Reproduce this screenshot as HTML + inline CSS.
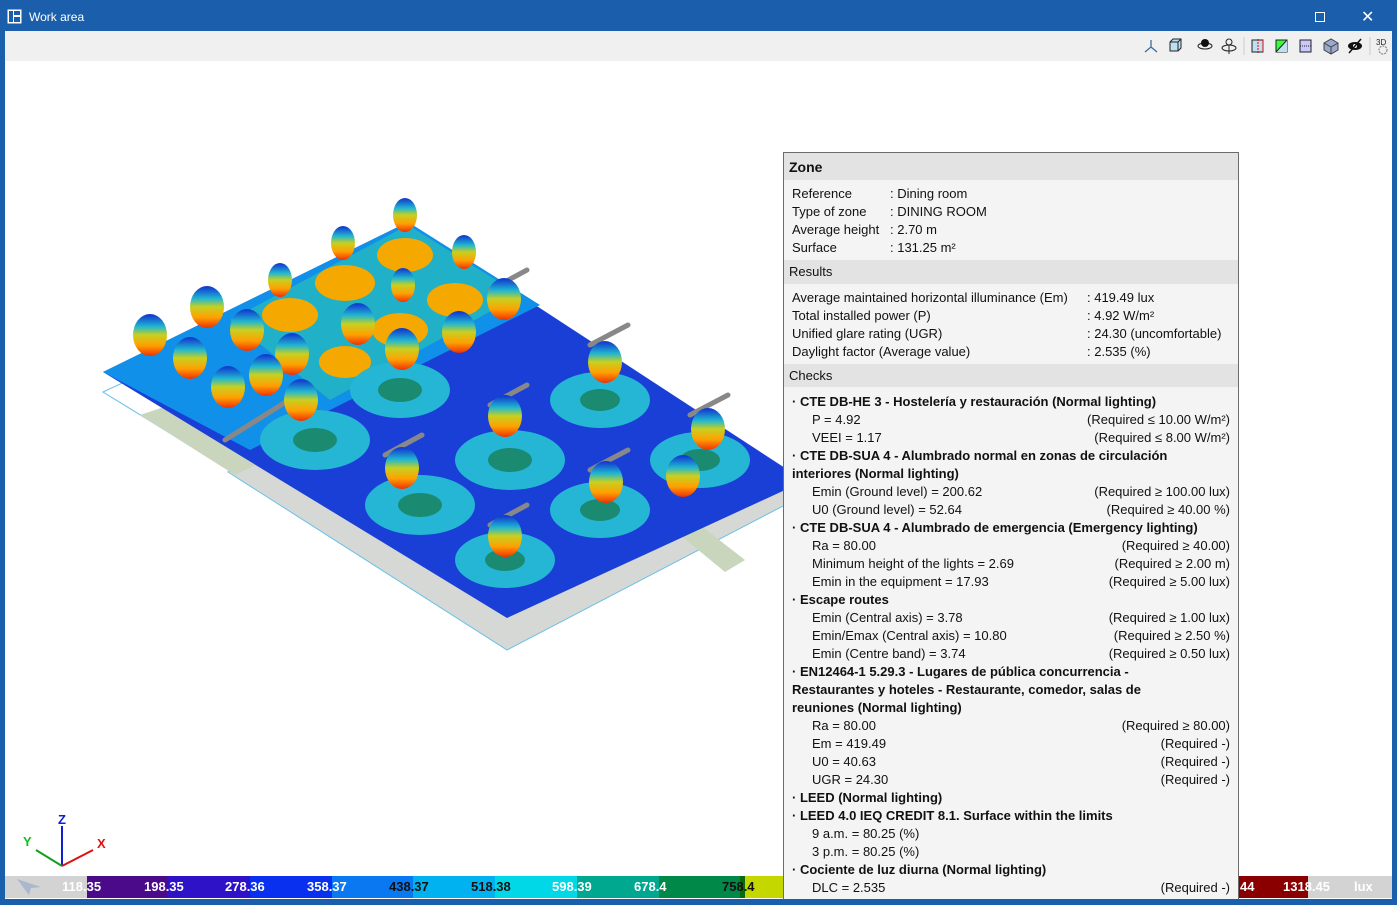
<!DOCTYPE html>
<html><head><meta charset="utf-8">
<style>
*{margin:0;padding:0;box-sizing:border-box}
body{width:1397px;height:905px;overflow:hidden;background:#1a5fab;font-family:"Liberation Sans",sans-serif;position:relative}
#title{position:absolute;left:0;top:0;width:1397px;height:31px;background:#1b5fac;color:#fff;font-size:12px}
#tb{position:absolute;left:5px;top:31px;width:1387px;height:30px;background:#f0f0f0}
#canvas{position:absolute;left:5px;top:61px;width:1387px;height:838px;background:#fff;overflow:hidden}
#legend{position:absolute;left:5px;top:876px;width:1387px;height:22px;background:#d3d3d3;font-size:13px;font-weight:bold;color:#fff}
#legend div{position:absolute;top:0;height:22px;line-height:22px}
#panel{position:absolute;left:783px;top:152px;width:456px;height:750px;background:#f4f4f4;border:1px solid #6b6b6b;font-size:13px;color:#111}
.h{position:absolute;left:0;width:454px;background:#e3e3e3;padding-left:5px}
.l{position:absolute;left:8px;width:438px;height:18px;line-height:18px;white-space:nowrap}
.l .r{position:absolute;right:0;top:0}
.b{font-weight:bold}
.s{padding-left:20px}
</style></head><body>
<div id="title">
 <svg style="position:absolute;left:7px;top:9px" width="15" height="15" viewBox="0 0 15 15"><rect x="0.5" y="0.5" width="14" height="14" fill="#fff"/><rect x="2" y="2" width="4" height="11" fill="#1b5fac"/><rect x="7" y="2" width="6" height="4" fill="#1b5fac"/><rect x="7" y="8" width="6" height="5" fill="#1b5fac"/></svg>
 <span style="position:absolute;left:29px;top:10px">Work area</span>
 <div style="position:absolute;left:1315px;top:12px;width:10px;height:10px;border:1px solid #fff"></div>
 <span style="position:absolute;left:1361px;top:7px;font-size:16px">✕</span>
</div>
<div id="tb">
 <svg style="position:absolute;left:1138px;top:5px" width="250" height="20" viewBox="0 0 250 20">
  <g stroke="#3a6d9a" fill="none" stroke-width="1.3"><path d="M8 4V11L2 16M8 11L14 16"/></g>
  <path d="M27 6l3-3h8v9l-3 3h-8z" fill="#bfe0f2" stroke="#222"/><path d="M27 6h8v9M35 6l3-3" stroke="#222" fill="none"/>
  <ellipse cx="62" cy="10" rx="7" ry="3" fill="none" stroke="#222"/><circle cx="62" cy="7" r="4" fill="#111"/>
  <circle cx="86" cy="6" r="3" fill="none" stroke="#222"/><ellipse cx="86" cy="12" rx="7" ry="3" fill="none" stroke="#222"/><path d="M86 9v9" stroke="#222"/>
  <line x1="101" y1="1" x2="101" y2="19" stroke="#ccc"/>
  <rect x="109" y="4" width="11" height="12" fill="#bfe0f2" stroke="#222"/><path d="M115 3v14" stroke="#e00" stroke-dasharray="2 1"/><path d="M120 4v12" stroke="#e00"/>
  <rect x="133" y="4" width="11" height="12" fill="#3f3" stroke="#222"/><path d="M133 16L144 4V16z" fill="#bfe0f2"/><path d="M133 16L144 4" stroke="#222"/>
  <rect x="157" y="4" width="11" height="12" fill="#c8c8ff" stroke="#222"/><path d="M157 10h11" stroke="#222" stroke-dasharray="1 1"/>
  <path d="M181 7l7-4 7 4v7l-7 4-7-4z" fill="#9ac" stroke="#444"/><path d="M181 7l7 4 7-4M188 11v7" stroke="#444" fill="none"/>
  <ellipse cx="212" cy="10" rx="7" ry="4" fill="#111"/><circle cx="212" cy="10" r="2" fill="#fff"/><path d="M206 17l12-14" stroke="#111" stroke-width="1.5"/>
  <line x1="227" y1="1" x2="227" y2="19" stroke="#ccc"/>
  <text x="233" y="9" font-size="8" font-family="Liberation Sans" fill="#222">3D</text><circle cx="240" cy="14" r="4" fill="none" stroke="#777" stroke-dasharray="2 1"/>
 </svg>
</div>
<div id="canvas">
 <svg width="1387" height="838" viewBox="5 61 1387 838" style="position:absolute;left:0;top:0">
  <defs>
   <linearGradient id="lum" x1="0" y1="0" x2="0" y2="1"><stop offset="0" stop-color="#1030d0"/><stop offset="0.3" stop-color="#20b8d0"/><stop offset="0.5" stop-color="#c8d020"/><stop offset="0.75" stop-color="#ffa000"/><stop offset="1" stop-color="#f03000"/></linearGradient>
  </defs>
  <polygon points="228,472 300,440 785,490 785,505 507,650" fill="#d6d8d6" stroke="#6ac0e8"/>
  <polygon points="103,392 150,370 260,455 230,470" fill="#fff" stroke="#6ac0e8"/>
  <polygon points="140,415 170,405 255,465 235,475" fill="#c9d6bd"/>
  <polygon points="680,535 700,525 745,560 725,572" fill="#c9d6bd"/>
  <polygon points="103,372 408,222 785,468 785,490 507,618" fill="#1a3fd6"/>
  <polygon points="103,372 408,222 540,305 250,450" fill="#1090e8"/>
  <polygon points="230,320 408,225 520,295 330,400" fill="#20b0c8"/>
  <ellipse cx="345" cy="283" rx="30" ry="18" fill="#f5a800"/>
  <ellipse cx="405" cy="255" rx="28" ry="17" fill="#f5a800"/>
  <ellipse cx="290" cy="315" rx="28" ry="17" fill="#f5a800"/>
  <ellipse cx="455" cy="300" rx="28" ry="17" fill="#f5a800"/>
  <ellipse cx="400" cy="330" rx="28" ry="17" fill="#f5a800"/>
  <ellipse cx="345" cy="362" rx="26" ry="16" fill="#f5a800"/>
  <g fill="#25b5d5">
   <ellipse cx="400" cy="390" rx="50" ry="28"/><ellipse cx="315" cy="440" rx="55" ry="30"/><ellipse cx="510" cy="460" rx="55" ry="30"/>
   <ellipse cx="420" cy="505" rx="55" ry="30"/><ellipse cx="600" cy="400" rx="50" ry="28"/><ellipse cx="700" cy="460" rx="50" ry="28"/>
   <ellipse cx="600" cy="510" rx="50" ry="28"/><ellipse cx="505" cy="560" rx="50" ry="28"/>
  </g>
  <g fill="#1a8a70">
   <ellipse cx="400" cy="390" rx="22" ry="12"/><ellipse cx="315" cy="440" rx="22" ry="12"/><ellipse cx="510" cy="460" rx="22" ry="12"/>
   <ellipse cx="420" cy="505" rx="22" ry="12"/><ellipse cx="600" cy="400" rx="20" ry="11"/><ellipse cx="700" cy="460" rx="20" ry="11"/>
   <ellipse cx="600" cy="510" rx="20" ry="11"/><ellipse cx="505" cy="560" rx="20" ry="11"/>
  </g>
  <g stroke="#888" stroke-width="5" stroke-linecap="round">
   <path d="M490 290l37-20M590 345l38-20M490 405l37-20M690 415l38-20M385 455l37-20M590 470l38-20M490 525l37-20M225 440l80-50"/>
  </g>
  <g fill="url(#lum)">
   <ellipse cx="405" cy="215" rx="12" ry="17"/><ellipse cx="343" cy="243" rx="12" ry="17"/><ellipse cx="464" cy="252" rx="12" ry="17"/>
   <ellipse cx="280" cy="280" rx="12" ry="17"/><ellipse cx="403" cy="285" rx="12" ry="17"/><ellipse cx="207" cy="307" rx="17" ry="21"/>
   <ellipse cx="150" cy="335" rx="17" ry="21"/><ellipse cx="247" cy="330" rx="17" ry="21"/><ellipse cx="358" cy="324" rx="17" ry="21"/>
   <ellipse cx="190" cy="358" rx="17" ry="21"/><ellipse cx="292" cy="354" rx="17" ry="21"/><ellipse cx="266" cy="375" rx="17" ry="21"/>
   <ellipse cx="228" cy="387" rx="17" ry="21"/><ellipse cx="301" cy="400" rx="17" ry="21"/><ellipse cx="402" cy="349" rx="17" ry="21"/>
   <ellipse cx="459" cy="332" rx="17" ry="21"/><ellipse cx="504" cy="299" rx="17" ry="21"/><ellipse cx="605" cy="362" rx="17" ry="21"/>
   <ellipse cx="505" cy="416" rx="17" ry="21"/><ellipse cx="708" cy="429" rx="17" ry="21"/><ellipse cx="402" cy="468" rx="17" ry="21"/>
   <ellipse cx="606" cy="482" rx="17" ry="21"/><ellipse cx="683" cy="476" rx="17" ry="21"/><ellipse cx="505" cy="536" rx="17" ry="21"/>
  </g>
  <g>
   <line x1="62" y1="866" x2="62" y2="826" stroke="#1020d0" stroke-width="2"/><text x="58" y="824" fill="#1020d0" font-size="13" font-weight="bold" font-family="Liberation Sans">Z</text>
   <line x1="62" y1="866" x2="36" y2="850" stroke="#10a020" stroke-width="2"/><text x="23" y="846" fill="#10c020" font-size="13" font-weight="bold" font-family="Liberation Sans">Y</text>
   <line x1="62" y1="866" x2="93" y2="850" stroke="#e01010" stroke-width="2"/><text x="97" y="848" fill="#e01010" font-size="13" font-weight="bold" font-family="Liberation Sans">X</text>
  </g>
 </svg>
</div>
<div id="legend">
 <svg style="position:absolute;left:10px;top:0" width="30" height="20"><path d="M2 3l24 8-10 1-2 7z" fill="#aab8cc"/></svg>
 <div style="left:82px;width:80px;background:#4b0a8a"></div>
 <div style="left:162px;width:83px;background:#2e12c8"></div>
 <div style="left:245px;width:82px;background:#0830ee"></div>
 <div style="left:327px;width:81px;background:#0a78f0"></div>
 <div style="left:408px;width:82px;background:#00b2f0"></div>
 <div style="left:490px;width:82px;background:#00d8e8"></div>
 <div style="left:572px;width:82px;background:#00a890"></div>
 <div style="left:654px;width:81px;background:#008848"></div>
 <div style="left:735px;width:80px;background:#0a6a10"></div>
 <div style="width:43px;left:740px;background:#c4d800"></div>
 <div style="left:1233px;width:70px;background:#8a0000"></div>
 <div style="left:57px">118.35</div><div style="left:139px">198.35</div><div style="left:220px">278.36</div>
 <div style="left:302px">358.37</div><div style="left:384px;color:#111">438.37</div><div style="left:466px;color:#111">518.38</div>
 <div style="left:547px">598.39</div><div style="left:629px">678.4</div><div style="left:717px;color:#111">758.4</div>
 <div style="left:1235px">44</div><div style="left:1278px">1318.45</div><div style="left:1349px">lux</div>
</div>
<div id="panel">
 <div class="h b" style="top:0;height:27px;line-height:28px;font-size:14px">Zone</div>
 <div class="l" style="top:32px">Reference<span style="position:absolute;left:98px">: Dining room</span></div>
 <div class="l" style="top:50px">Type of zone<span style="position:absolute;left:98px">: DINING ROOM</span></div>
 <div class="l" style="top:68px">Average height<span style="position:absolute;left:98px">: 2.70 m</span></div>
 <div class="l" style="top:86px">Surface<span style="position:absolute;left:98px">: 131.25 m²</span></div>
 <div class="h" style="top:107px;height:24px;line-height:24px">Results</div>
 <div class="l" style="top:136px">Average maintained horizontal illuminance (Em)<span style="position:absolute;left:295px">: 419.49 lux</span></div>
 <div class="l" style="top:154px">Total installed power (P)<span style="position:absolute;left:295px">: 4.92 W/m²</span></div>
 <div class="l" style="top:172px">Unified glare rating (UGR)<span style="position:absolute;left:295px">: 24.30 (uncomfortable)</span></div>
 <div class="l" style="top:190px">Daylight factor (Average value)<span style="position:absolute;left:295px">: 2.535 (%)</span></div>
 <div class="h" style="top:211px;height:23px;line-height:24px">Checks</div>
 <div class="l b" style="top:240px">· CTE DB-HE 3 - Hostelería y restauración (Normal lighting)</div>
 <div class="l s" style="top:258px">P = 4.92<span class="r">(Required ≤ 10.00 W/m²)</span></div>
 <div class="l s" style="top:276px">VEEI = 1.17<span class="r">(Required ≤ 8.00 W/m²)</span></div>
 <div class="l b" style="top:294px">· CTE DB-SUA 4 - Alumbrado normal en zonas de circulación</div>
 <div class="l b" style="top:312px">interiores (Normal lighting)</div>
 <div class="l s" style="top:330px">Emin (Ground level) = 200.62<span class="r">(Required ≥ 100.00 lux)</span></div>
 <div class="l s" style="top:348px">U0 (Ground level) = 52.64<span class="r">(Required ≥ 40.00 %)</span></div>
 <div class="l b" style="top:366px">· CTE DB-SUA 4 - Alumbrado de emergencia (Emergency lighting)</div>
 <div class="l s" style="top:384px">Ra = 80.00<span class="r">(Required ≥ 40.00)</span></div>
 <div class="l s" style="top:402px">Minimum height of the lights = 2.69<span class="r">(Required ≥ 2.00 m)</span></div>
 <div class="l s" style="top:420px">Emin in the equipment = 17.93<span class="r">(Required ≥ 5.00 lux)</span></div>
 <div class="l b" style="top:438px">· Escape routes</div>
 <div class="l s" style="top:456px">Emin (Central axis) = 3.78<span class="r">(Required ≥ 1.00 lux)</span></div>
 <div class="l s" style="top:474px">Emin/Emax (Central axis) = 10.80<span class="r">(Required ≥ 2.50 %)</span></div>
 <div class="l s" style="top:492px">Emin (Centre band) = 3.74<span class="r">(Required ≥ 0.50 lux)</span></div>
 <div class="l b" style="top:510px">· EN12464-1 5.29.3 - Lugares de pública concurrencia -</div>
 <div class="l b" style="top:528px">Restaurantes y hoteles - Restaurante, comedor, salas de</div>
 <div class="l b" style="top:546px">reuniones (Normal lighting)</div>
 <div class="l s" style="top:564px">Ra = 80.00<span class="r">(Required ≥ 80.00)</span></div>
 <div class="l s" style="top:582px">Em = 419.49<span class="r">(Required -)</span></div>
 <div class="l s" style="top:600px">U0 = 40.63<span class="r">(Required -)</span></div>
 <div class="l s" style="top:618px">UGR = 24.30<span class="r">(Required -)</span></div>
 <div class="l b" style="top:636px">· LEED (Normal lighting)</div>
 <div class="l b" style="top:654px">· LEED 4.0 IEQ CREDIT 8.1. Surface within the limits</div>
 <div class="l s" style="top:672px">9 a.m. = 80.25 (%)</div>
 <div class="l s" style="top:690px">3 p.m. = 80.25 (%)</div>
 <div class="l b" style="top:708px">· Cociente de luz diurna (Normal lighting)</div>
 <div class="l s" style="top:726px">DLC = 2.535<span class="r">(Required -)</span></div>
</div>
<div style="position:absolute;left:0;top:899px;width:1397px;height:6px;background:#1a5fab"></div>
</body></html>
